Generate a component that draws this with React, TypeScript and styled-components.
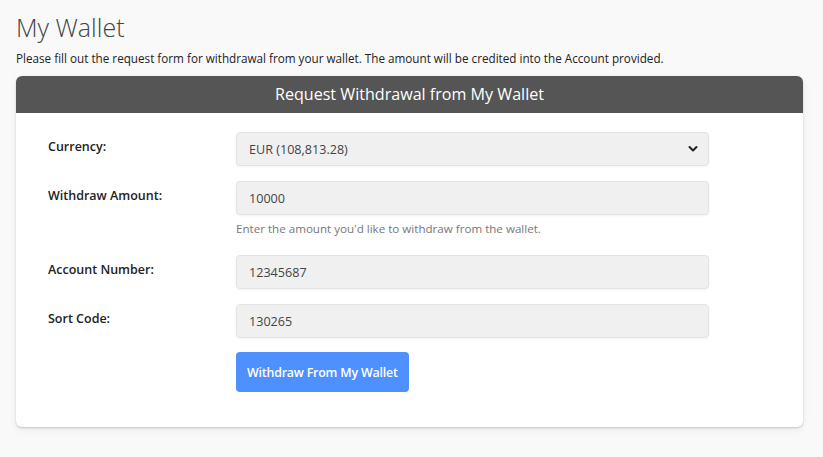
import styled, { createGlobalStyle } from 'styled-components';

const Global = createGlobalStyle`
  html, body {
    margin: 0;
    padding: 0;
    background: #f9f9f9;
  }
  body {
    font-family: 'Open Sans', 'Noto Sans', sans-serif;
    color: #333;
  }
`;

const Page = styled.div`
  padding: 10px 20px 30px 16px;
`;

const Title = styled.h1`
  margin: 0;
  font-size: 25px;
  font-weight: 300;
  line-height: 34px;
  color: #444;
`;

const Intro = styled.p`
  margin: 7px 0 10px;
  font-size: 11.7px;
  line-height: 15px;
  color: #222;
`;

const Card = styled.div`
  background: #fff;
  border-radius: 6px;
  box-shadow: 0 1px 2px rgba(0, 0, 0, 0.18), 0 3px 10px rgba(0, 0, 0, 0.06);
  overflow: hidden;
`;

const CardHeader = styled.div`
  background: #555;
  color: #fff;
  text-align: center;
  font-size: 16.1px;
  font-weight: 500;
  height: 37px;
  line-height: 37px;
`;

const Form = styled.form`
  padding: 19px 32px 35px;
  display: grid;
  grid-template-columns: 188px 473px;
  row-gap: 15px;
`;

const Label = styled.label`
  font-size: 12.5px;
  font-weight: 600;
  color: #222;
  padding-top: 6px;
`;

const Field = styled.div`
  display: flex;
  flex-direction: column;
`;

const Input = styled.input`
  box-sizing: border-box;
  height: 34px;
  width: 100%;
  padding: 0 12px;
  border: 1px solid #e3e3e3;
  border-radius: 4px;
  background: #f0f0f0;
  box-shadow: 0 1px 3px rgba(0, 0, 0, 0.05);
  font-family: inherit;
  font-size: 12.6px;
  color: #444;
  outline: none;
`;

const SelectWrap = styled.div`
  position: relative;
`;

const Select = styled.select`
  box-sizing: border-box;
  height: 34px;
  width: 100%;
  padding: 0 12px;
  border: 1px solid #e3e3e3;
  border-radius: 4px;
  background: #f0f0f0;
  box-shadow: 0 1px 3px rgba(0, 0, 0, 0.05);
  font-family: inherit;
  font-size: 12.6px;
  color: #444;
  appearance: none;
  outline: none;
`;

const Chevron = styled.svg`
  position: absolute;
  right: 11px;
  top: 13px;
  pointer-events: none;
`;

const Help = styled.div`
  margin: 5px 0 3px;
  font-size: 11.6px;
  line-height: 17px;
  color: #777;
`;

const Button = styled.button`
  justify-self: start;
  height: 40px;
  padding: 0 11px;
  border: none;
  border-radius: 4px;
  background: #4d90fe;
  color: #fff;
  font-family: inherit;
  font-size: 12.4px;
  font-weight: 600;
  letter-spacing: -0.2px;
  margin-top: -1px;
`;

export default function App() {
  return (
    <>
      <Global />
      <Page>
        <Title>My Wallet</Title>
        <Intro>
          Please fill out the request form for withdrawal from your wallet. The amount will be credited into the Account provided.
        </Intro>
        <Card>
          <CardHeader>Request Withdrawal from My Wallet</CardHeader>
          <Form onSubmit={(e) => e.preventDefault()}>
            <Label>Currency:</Label>
            <SelectWrap>
              <Select defaultValue="eur">
                <option value="eur">EUR (108,813.28)</option>
              </Select>
              <Chevron width="10" height="8" viewBox="0 0 10 8">
                <path d="M1.5 2 L5 5.5 L8.5 2" fill="none" stroke="#222" strokeWidth="2" strokeLinecap="round" strokeLinejoin="round" />
              </Chevron>
            </SelectWrap>

            <Label>Withdraw Amount:</Label>
            <Field>
              <Input defaultValue="10000" />
              <Help>Enter the amount you'd like to withdraw from the wallet.</Help>
            </Field>

            <Label>Account Number:</Label>
            <Input defaultValue="12345687" />

            <Label>Sort Code:</Label>
            <Input defaultValue="130265" />

            <span />
            <Button type="submit">Withdraw From My Wallet</Button>
          </Form>
        </Card>
      </Page>
    </>
  );
}
